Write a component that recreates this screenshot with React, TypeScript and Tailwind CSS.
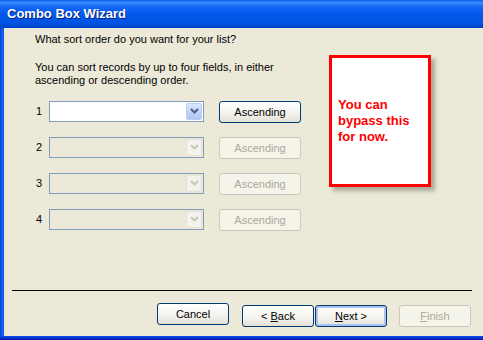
import type { ReactNode } from 'react';

function Chevron({ color }: { color: string }) {
  return (
    <svg width="9" height="6" viewBox="0 0 9 6" aria-hidden="true">
      <path d="M1 1 L4.5 4.5 L8 1" fill="none" stroke={color} strokeWidth="2" />
    </svg>
  );
}

function ComboBox({ disabled }: { disabled?: boolean }) {
  return (
    <div
      className={
        disabled
          ? 'flex h-[21px] w-[155px] justify-end border border-[#7F9DB9] bg-[#ECE9D8] p-px'
          : 'flex h-[21px] w-[155px] justify-end border border-[#7F9DB9] bg-white p-px'
      }
    >
      <div
        className={
          disabled
            ? 'flex w-[16px] items-center justify-center rounded-[2px] border border-[#E4E2D8] bg-[#F3F2EC]'
            : 'flex w-[16px] items-center justify-center rounded-[2px] border border-[#B9CCF4] bg-[linear-gradient(to_bottom,#DCE6FC,#C2D3FA_50%,#B2C6F3)]'
        }
      >
        <Chevron color={disabled ? '#C9C7BA' : '#4D6185'} />
      </div>
    </div>
  );
}

function XpButton({
  children,
  width,
  disabled,
  focused,
}: {
  children: ReactNode;
  width: string;
  disabled?: boolean;
  focused?: boolean;
}) {
  if (disabled) {
    return (
      <button
        type="button"
        className={`${width} h-[22px] rounded-[3px] border border-[#CAC8BB] bg-[#F5F4EA] text-[11px] text-[#ACA899]`}
      >
        {children}
      </button>
    );
  }
  return (
    <button
      type="button"
      className={
        focused
          ? `${width} h-[22px] rounded-[3px] border border-[#003C74] bg-[linear-gradient(to_bottom,#FFFFFF,#F3F2EC_60%,#E2E0D6)] text-[11px] text-black shadow-[inset_0_0_0_2px_#A9C3EE]`
          : `${width} h-[22px] rounded-[3px] border border-[#003C74] bg-[linear-gradient(to_bottom,#FFFFFF,#F3F2EC_60%,#E2E0D6)] text-[11px] text-black`
      }
    >
      {children}
    </button>
  );
}

function SortRow({ n, disabled }: { n: number; disabled?: boolean }) {
  return (
    <div className="flex h-[22px] items-center pl-[32px]">
      <span className="w-[13px] text-[11px] text-black">{n}</span>
      <ComboBox disabled={disabled} />
      <div className="ml-[15px]">
        <XpButton width="w-[82px]" disabled={disabled}>
          Ascending
        </XpButton>
      </div>
    </div>
  );
}

export default function App() {
  return (
    <div className="flex h-[340px] w-[483px] flex-col overflow-hidden bg-[#ECE9D8] font-['Liberation_Sans',Arial,sans-serif]">
      <div className="flex h-[28px] items-center bg-[linear-gradient(to_bottom,#0A5CEC_0%,#3D8EFF_10%,#1666F4_22%,#0058EA_55%,#0053E0_85%,#0040C0_100%)] pl-[7px]">
        <span className="text-[13px] font-bold text-white [text-shadow:1px_1px_0_#0A1E80]">
          Combo Box Wizard
        </span>
      </div>

      <div className="flex flex-1">
        <div className="w-[4px] bg-[linear-gradient(to_right,#0831D9,#166AEE,#0A4FE0)]" />

        <div className="flex flex-1 flex-col">
          <p className="pl-[31px] pt-[5px] text-[11px] leading-[13px] text-black">
            What sort order do you want for your list?
          </p>

          <div className="mt-[9px] flex">
            <div className="flex w-[301px] flex-col">
              <p className="mt-[6px] pl-[31px] text-[11px] leading-[13px] text-black">
                You can sort records by up to four fields, in either
                <br />
                ascending or descending order.
              </p>
              <div className="mt-[13px] flex flex-col gap-[14px]">
                <SortRow n={1} />
                <SortRow n={2} disabled />
                <SortRow n={3} disabled />
                <SortRow n={4} disabled />
              </div>
            </div>

            <div className="ml-[24px] flex h-[132px] w-[102px] items-center border-[3px] border-[#FF0000] bg-white pl-[6px] shadow-[4px_4px_4px_rgba(90,90,70,0.45)]">
              <p className="text-[13px] font-bold leading-[16px] text-[#FF0000]">
                You can
                <br />
                bypass this
                <br />
                for now.
              </p>
            </div>
          </div>

          <div className="mt-auto flex flex-col pb-[9px]">
            <div className="ml-[8px] h-px w-[460px] bg-black" />
            <div className="mt-[12px] flex justify-end pr-[12px]">
              <XpButton width="w-[72px]">Cancel</XpButton>
              <div className="ml-[13px]">
                <XpButton width="w-[72px]">
                  &lt; <u>B</u>ack
                </XpButton>
              </div>
              <div className="ml-px">
                <XpButton width="w-[72px]" focused>
                  <u>N</u>ext &gt;
                </XpButton>
              </div>
              <div className="ml-[12px]">
                <XpButton width="w-[72px]" disabled>
                  <u>F</u>inish
                </XpButton>
              </div>
            </div>
          </div>
        </div>
      </div>

      <div className="h-[4px] bg-[linear-gradient(to_bottom,#0A4FE0,#0831D9,#001EA0)]" />
    </div>
  );
}
